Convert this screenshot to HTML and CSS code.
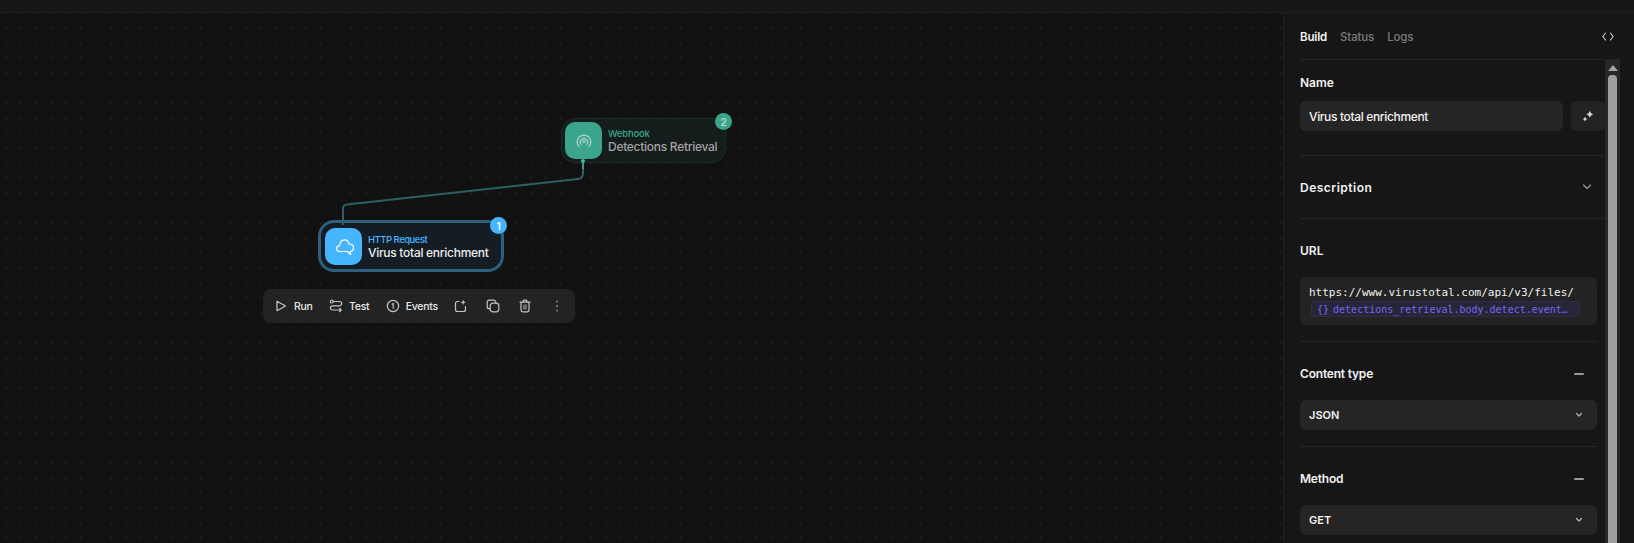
FILE: index.html
```html
<!DOCTYPE html>
<html lang="en">
<head>
  <meta charset="UTF-8" />
  <title>Workflow builder</title>
  <link rel="stylesheet" href="styles.css">
</head>
<body>
  <div class="topbar"></div>
  <div class="workspace">
    <main class="canvas">
      <svg class="edges" width="1283" height="531" fill="none" aria-hidden="true">
        <path class="edge" d="M343 212V196Q343 192 347 191.500L578 166Q583 165.500 583 160V149"/>
        <path class="edge-tip" d="M583 156V149"/>
        <circle class="edge-handle" cx="583" cy="148" r="2"/>
      </svg>

      <div class="node node-webhook">
        <div class="node-icon">
          <svg width="20" height="20" viewBox="0 0 20 20" fill="none" stroke="currentColor" stroke-width="1.300" stroke-linecap="round">
            <path d="M5 15.500A6.800 6.800 0 1 1 15 15.500"/>
            <path d="M7.300 13.300A3.500 3.500 0 1 1 12.700 13.300"/>
            <circle cx="10" cy="10.500" r="0.900"/>
          </svg>
        </div>
        <div class="node-text">
          <span class="node-type">Webhook</span>
          <span class="node-name">Detections Retrieval</span>
        </div>
        <span class="node-badge">2</span>
      </div>

      <div class="node node-http">
        <div class="node-icon">
          <svg width="20" height="20" viewBox="0 0 20 20" fill="none" stroke="currentColor" stroke-width="1.200" stroke-linejoin="round">
            <path d="M6 15.500C3.800 15.500 2.600 14 2.600 12.500C2.600 10.800 4 9.600 5.700 9.600C5.900 6 8 3.800 10.600 3.800C13 3.800 14.700 5.600 15 8C17.800 8 19.500 9.600 19.500 11.800C19.500 13.800 18 15.300 16.300 15.500L16.600 18.500L13.400 15.500Z"/>
          </svg>
        </div>
        <div class="node-text">
          <span class="node-type">HTTP Request</span>
          <span class="node-name">Virus total enrichment</span>
        </div>
        <span class="node-badge">1</span>
      </div>

      <div class="node-toolbar">
        <button class="tool" type="button">
          <svg width="14" height="14" viewBox="0 0 14 14" fill="none" stroke="currentColor" stroke-width="1.200" stroke-linejoin="round"><path d="M3 2.200V11.800L11.500 7Z"/></svg>
          Run
        </button>
        <button class="tool" type="button">
          <svg width="14" height="14" viewBox="0 0 14 14" fill="none" stroke="currentColor" stroke-width="1.200" stroke-linecap="round" stroke-linejoin="round"><circle cx="2.800" cy="2.500" r="1.500"/><path d="M4.300 2.500H10.500A2 2 0 0 1 10.500 6.800H3.500A2.100 2.100 0 0 0 3.500 11H12M10.500 9.300L12.300 11L10.500 12.700"/></svg>
          Test
        </button>
        <button class="tool" type="button">
          <svg width="14" height="14" viewBox="0 0 14 14" fill="none" stroke="currentColor" stroke-width="1.200" stroke-linecap="round"><circle cx="7" cy="7" r="5.600"/><path d="M6.200 5.200L7.200 4.600V9.300"/></svg>
          Events
        </button>
        <button class="tool tool-icon" type="button" aria-label="Add to">
          <svg width="14" height="14" viewBox="0 0 14 14" fill="none" stroke="currentColor" stroke-width="1.200" stroke-linecap="round"><path d="M5 2.500H3.500A2 2 0 0 0 1.500 4.500V10.500A2 2 0 0 0 3.500 12.500H9.500A2 2 0 0 0 11.500 10.500V7.500M9.200 1.800V4.800M7.700 3.300H10.700"/></svg>
        </button>
        <button class="tool tool-icon" type="button" aria-label="Duplicate">
          <svg width="14" height="14" viewBox="0 0 14 14" fill="none" stroke="currentColor" stroke-width="1.200"><rect x="4.200" y="4.200" width="8.600" height="8.600" rx="2.500"/><path d="M9.700 4.200V3.200A2 2 0 0 0 7.700 1.200H3.200A2 2 0 0 0 1.200 3.200V7.700A2 2 0 0 0 3.200 9.700H4.200"/></svg>
        </button>
        <button class="tool tool-icon" type="button" aria-label="Delete">
          <svg width="14" height="14" viewBox="0 0 14 14" fill="none" stroke="currentColor" stroke-width="1.200" stroke-linecap="round"><rect x="5" y="5.500" width="4" height="5" fill="#6e6e6e" stroke="none"/><path d="M2 3.200H12M5 3V2.400A1.200 1.200 0 0 1 6.200 1.200H7.800A1.200 1.200 0 0 1 9 2.400V3M3 3.200V11A1.800 1.800 0 0 0 4.800 12.800H9.200A1.800 1.800 0 0 0 11 11V3.200"/></svg>
        </button>
        <button class="tool tool-icon" type="button" aria-label="More">
          <svg width="14" height="14" viewBox="0 0 14 14" fill="#8a8a8a"><circle cx="7" cy="2.500" r="1"/><circle cx="7" cy="7" r="1"/><circle cx="7" cy="11.500" r="1"/></svg>
        </button>
      </div>
    </main>

    <aside class="panel">
      <header class="panel-tabs">
        <nav class="tabs">
          <span class="tab active">Build</span>
          <span class="tab">Status</span>
          <span class="tab">Logs</span>
        </nav>
        <svg class="code-icon" width="12" height="9" viewBox="0 0 12 9" fill="none" stroke="currentColor" stroke-width="1.100" stroke-linecap="round" stroke-linejoin="round"><path d="M3.500 1L0.800 4.500L3.500 8M8.500 1L11.200 4.500L8.500 8"/></svg>
      </header>

      <div class="panel-body">
        <div class="panel-scroll">
          <section class="section section-name">
            <label class="label">Name</label>
            <div class="name-row">
              <div class="field">Virus total enrichment</div>
              <button class="magic-btn" type="button" aria-label="Generate name">
                <svg width="12" height="12" viewBox="0 0 12 12" fill="currentColor"><path d="M7.800 0.800L9 3.200L11.200 4.300L9 5.500L7.800 7.700L6.600 5.500L4.400 4.300L6.600 3.200Z"/><path d="M3 6.800L3.800 8.300L5.200 9.100L3.800 9.900L3 11.400L2.200 9.900L0.800 9.100L2.200 8.300Z"/></svg>
              </button>
            </div>
          </section>

          <section class="section section-collapsed">
            <div class="section-head">
              <span class="label">Description</span>
              <svg class="chevron" width="10" height="6" viewBox="0 0 10 6" fill="none" stroke="currentColor" stroke-width="1.200" stroke-linecap="round" stroke-linejoin="round"><path d="M1.500 1L5 4.500L8.500 1"/></svg>
            </div>
          </section>

          <div class="inset">
            <section class="section section-url">
              <span class="label">URL</span>
              <div class="url-box">
                <div class="url-text">https://www.virustotal.com/api/v3/files/</div>
                <div class="chip"><span class="chip-brace">{}</span><span class="chip-text">detections_retrieval.body.detect.event…</span></div>
              </div>
            </section>

            <section class="section section-select">
              <div class="section-head">
                <span class="label">Content type</span>
                <span class="minus"></span>
              </div>
              <div class="field select">JSON<svg width="8" height="6" viewBox="0 0 8 6" fill="none" stroke="currentColor" stroke-width="1.300" stroke-linecap="round" stroke-linejoin="round"><path d="M1.500 1.500L4 4L6.500 1.500"/></svg></div>
            </section>

            <section class="section section-select no-border">
              <div class="section-head">
                <span class="label">Method</span>
                <span class="minus"></span>
              </div>
              <div class="field select">GET<svg width="8" height="6" viewBox="0 0 8 6" fill="none" stroke="currentColor" stroke-width="1.300" stroke-linecap="round" stroke-linejoin="round"><path d="M1.500 1.500L4 4L6.500 1.500"/></svg></div>
            </section>
          </div>
        </div>

        <div class="scrollbar">
          <span class="scroll-arrow"></span>
          <span class="scroll-thumb"></span>
        </div>
      </div>
    </aside>
  </div>
</body>
</html>
```

FILE: styles.css
```css
:root {
  --color-bg: #111111;
  --color-panel: #161616;
  --color-line: #252525;
  --color-field: #252525;
  --color-text: #f2f2f2;
  --color-muted: #7a7a7a;
  --color-blue: #45b5ff;
  --color-green: #3ba58c;
}

* {
  box-sizing: border-box;
}

html, body {
  height: 100%;
}

body {
  margin: 0;
  background-color: var(--color-bg);
  color: var(--color-text);
  font-family: Inter, "Noto Sans", sans-serif;
  font-size: 12px;
  display: flex;
  flex-direction: column;
  overflow: hidden;
}

.topbar {
  height: 13px;
  flex: none;
  background-color: var(--color-panel);
  border-bottom: 1px solid #1f1f1f;
}

.workspace {
  flex: 1;
  display: flex;
  min-height: 0;
}

/* the flow canvas: nodes sit at free positions */
.canvas {
  flex: 1;
  position: relative;
  overflow: hidden;
  background-color: var(--color-bg);
  background-image: radial-gradient(circle, #262626 0.9px, transparent 1.1px);
  background-size: 15px 15px;
  background-position: -1.500px 7.500px;
}

.edges {
  position: absolute;
  left: 0;
  top: 0;
  z-index: 1;
}

.edge {
  stroke: #2d5f63;
  stroke-width: 2;
}

.edge-tip {
  stroke: #3b9a84;
  stroke-width: 2;
}

.edge-handle {
  fill: #4ab79c;
}

.node {
  position: absolute;
  display: flex;
  align-items: center;
  gap: 6px;
  border-radius: 14px;
}

.node-icon {
  width: 37px;
  height: 37px;
  flex: none;
  border-radius: 10px;
  display: flex;
  align-items: center;
  justify-content: center;
}

.node-text {
  display: flex;
  flex-direction: column;
  white-space: nowrap;
}

.node-type {
  font-size: 9.500px;
  line-height: 12px;
  font-weight: 500;
  letter-spacing: -0.2px;
}

.node-name {
  font-size: 12px;
  line-height: 13px;
  font-weight: 500;
  letter-spacing: -0.28px;
}

.node-badge {
  position: absolute;
  width: 17px;
  height: 17px;
  border-radius: 50%;
  display: flex;
  align-items: center;
  justify-content: center;
  font-size: 10px;
  font-weight: 600;
}

.node-webhook {
  left: 561px;
  top: 105px;
  width: 165px;
  height: 45px;
  padding-left: 3px;
  background-color: #151c1c;
  border: 1px solid #1c2b29;
}

.node-webhook .node-icon {
  background-color: var(--color-green);
  color: #a9d0c5;
}

.node-webhook .node-type {
  color: var(--color-green);
}

.node-webhook .node-name {
  color: #a3a3a3;
}

.node-webhook .node-badge {
  right: -7px;
  top: -6px;
  background-color: var(--color-green);
  color: #b5dcd2;
}

.node-http {
  left: 318px;
  top: 207px;
  width: 186px;
  height: 52px;
  padding-left: 4px;
  background-color: #141c24;
  border: 3px solid #2f5e7e;
  border-radius: 16px;
}

.node-http .node-icon {
  background-color: var(--color-blue);
  color: #ffffff;
}

.node-http .node-type {
  color: var(--color-blue);
  letter-spacing: -0.5px;
}

.node-http .node-name {
  color: #ececec;
}

.node-http .node-badge {
  right: -6px;
  top: -6px;
  background-color: var(--color-blue);
  color: #ffffff;
}

.node-toolbar {
  position: absolute;
  left: 263px;
  top: 276px;
  width: 312px;
  height: 34px;
  display: flex;
  align-items: center;
  padding-left: 11px;
  background-color: #232323;
  border-radius: 8px;
}

.tool {
  display: flex;
  align-items: center;
  gap: 6px;
  margin-right: 16.500px;
  padding: 0;
  border: none;
  background: none;
  color: #e8e8e8;
  font-family: inherit;
  font-size: 10.500px;
  font-weight: 500;
  letter-spacing: -0.3px;
}

.tool svg {
  color: #c4c4c4;
}

.tool-icon {
  margin-right: 18px;
}

/* right side panel */
.panel {
  width: 351px;
  flex: none;
  display: flex;
  flex-direction: column;
  padding-left: 16px;
  padding-right: 14px;
  background-color: var(--color-panel);
  border-left: 1px solid #1f1f1f;
}

.panel-tabs {
  height: 47px;
  flex: none;
  display: flex;
  align-items: center;
  justify-content: space-between;
  padding-right: 6px;
  border-bottom: 1px solid var(--color-line);
}

.tabs {
  display: flex;
  gap: 13px;
  margin-top: 2px;
  font-size: 11.500px;
  letter-spacing: -0.15px;
}

.tab {
  font-weight: 500;
  color: var(--color-muted);
}

.tab.active {
  font-weight: 600;
  color: var(--color-text);
}

.code-icon {
  color: #d0d0d0;
}

.panel-body {
  flex: 1;
  min-height: 0;
  display: flex;
  overflow: hidden;
}

.panel-scroll {
  flex: 1;
  min-width: 0;
}

.scrollbar {
  width: 15px;
  flex: none;
  display: flex;
  flex-direction: column;
  align-items: center;
  padding-top: 5px;
  background-color: #272727;
}

.scroll-arrow {
  width: 0;
  height: 0;
  border-left: 5px solid transparent;
  border-right: 5px solid transparent;
  border-bottom: 6px solid #a3a3a3;
}

.scroll-thumb {
  width: 9px;
  flex: 1;
  margin-top: 4px;
  background-color: #9e9e9e;
  border-radius: 4px 4px 0 0;
}

.section {
  border-bottom: 1px solid var(--color-line);
}

.label {
  font-weight: 600;
  line-height: 15px;
  color: var(--color-text);
  display: block;
}

.section-name {
  height: 96px;
  padding-top: 15px;
}

.name-row {
  display: flex;
  gap: 8px;
  margin-top: 11px;
}

.field {
  flex: 1;
  height: 30px;
  display: flex;
  align-items: center;
  padding: 0 9px;
  background-color: var(--color-field);
  border-radius: 6px;
  font-weight: 500;
  letter-spacing: -0.35px;
}

.magic-btn {
  width: 34px;
  height: 30px;
  flex: none;
  display: flex;
  align-items: center;
  justify-content: center;
  padding: 0;
  border: none;
  border-radius: 6px;
  background-color: #222222;
  color: #d8d8d8;
}

.section-collapsed {
  height: 63px;
  display: flex;
  align-items: center;
}

.section-collapsed .label {
  letter-spacing: 0.5px;
}

.section-head {
  flex: 1;
  display: flex;
  align-items: center;
  justify-content: space-between;
}

.section-collapsed .section-head {
  padding-right: 13px;
}

.chevron {
  color: #9a9a9a;
}

.inset {
  padding-right: 8px;
}

.section-url {
  height: 123px;
  padding-top: 24px;
}

.url-box {
  margin-top: 19px;
  height: 48px;
  padding: 8px 17px 0 9px;
  background-color: #232323;
  border-radius: 6px;
  font-family: "DejaVu Sans Mono", "Liberation Mono", monospace;
  font-size: 11px;
}

.url-text {
  line-height: 16px;
  color: #f0f0f0;
}

.chip {
  height: 16px;
  margin-left: 2px;
  display: flex;
  align-items: center;
  padding-left: 5px;
  background-color: #272638;
  border: 1px solid #2e2d42;
  border-radius: 3px;
  color: #7468ee;
  font-size: 10px;
  white-space: nowrap;
  overflow: hidden;
}

.chip-brace {
  margin-right: 4px;
}

.section-select {
  height: 105px;
  padding-top: 24px;
}

.section-select.no-border {
  border-bottom: none;
}

.section-select .section-head {
  padding-right: 13px;
}

.section-select .label {
  letter-spacing: -0.2px;
}

.minus {
  width: 10px;
  height: 2px;
  background-color: #9a9a9a;
  border-radius: 1px;
}

.select {
  margin-top: 19px;
  justify-content: space-between;
  padding-right: 14px;
  font-size: 11px;
  font-weight: 600;
  letter-spacing: 0;
}

.select svg {
  color: #b0b0b0;
}
```
